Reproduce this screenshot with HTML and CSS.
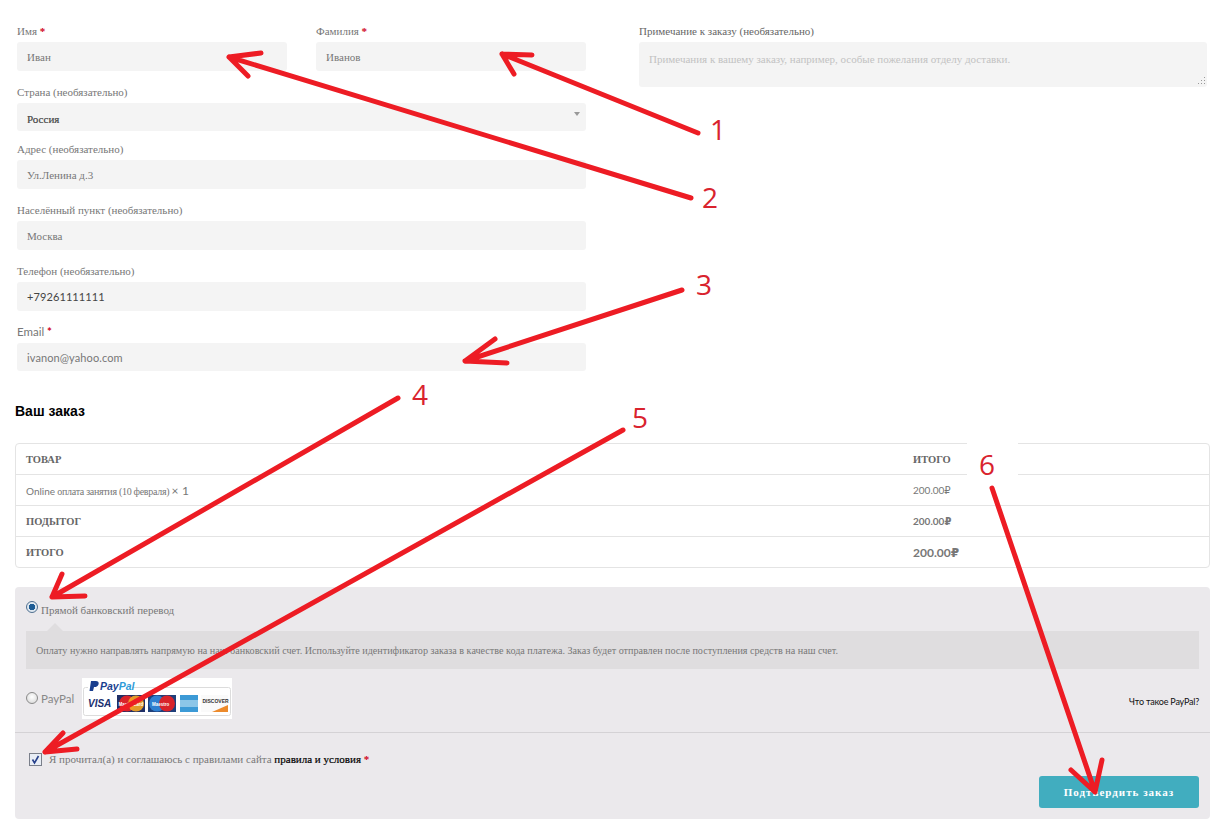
FILE: index.html
```html
<!DOCTYPE html>
<html lang="ru">
<head>
<meta charset="utf-8">
<title>Оформление заказа</title>
<link rel="stylesheet" href="styles.css">
</head>
<body>
<main class="page">
  <section class="form-grid">
    <div class="billing">
      <div class="row-two">
        <div class="field">
          <div class="label">Имя <span class="req">*</span></div>
          <div class="input">Иван</div>
        </div>
        <div class="field">
          <div class="label">Фамилия <span class="req">*</span></div>
          <div class="input">Иванов</div>
        </div>
      </div>
      <div class="field spaced">
        <div class="label">Страна (необязательно)</div>
        <div class="input select short"><span class="strong">Россия</span><span class="caret"></span></div>
      </div>
      <div class="field spaced-tight">
        <div class="label">Адрес (необязательно)</div>
        <div class="input">Ул.Ленина д.3</div>
      </div>
      <div class="field spaced">
        <div class="label">Населённый пункт (необязательно)</div>
        <div class="input">Москва</div>
      </div>
      <div class="field spaced">
        <div class="label">Телефон (необязательно)</div>
        <div class="input sans dark">+79261111111</div>
      </div>
      <div class="field spaced">
        <div class="label sans-label">Email <span class="req">*</span></div>
        <div class="input short sans">ivanon@yahoo.com</div>
      </div>
    </div>
    <div class="notes">
      <div class="label dark-label">Примечание к заказу (необязательно)</div>
      <div class="textarea">
        Примечания к вашему заказу, например, особые пожелания отделу доставки.
        <svg class="grip" width="10" height="10" viewBox="0 0 10 10"><g fill="#999"><rect x="8" y="1" width="1" height="1"/><rect x="8" y="4" width="1" height="1"/><rect x="8" y="7" width="1" height="1"/><rect x="5" y="4" width="1" height="1"/><rect x="5" y="7" width="1" height="1"/><rect x="2" y="7" width="1" height="1"/></g></svg>
      </div>
    </div>
  </section>

  <h2 class="order-title">Ваш заказ</h2>

  <table class="order">
    <tr><th class="col-name">Товар</th><th>Итого</th></tr>
    <tr><td class="col-name item"><span class="latin">Online</span> оплата занятия (10 февраля) <span class="qty">× 1</span></td><td class="money">200.00₽</td></tr>
    <tr><th class="col-name">Подытог</th><td class="money semi">200.00₽</td></tr>
    <tr><th class="col-name">Итого</th><td class="money total">200.00₽</td></tr>
  </table>

  <section class="payment">
    <div class="pay-methods">
      <div class="method">
        <span class="radio checked"></span>
        <span class="method-name">Прямой банковский перевод</span>
      </div>
      <div class="notice">Оплату нужно направлять напрямую на наш банковский счет. Используйте идентификатор заказа в качестве кода платежа. Заказ будет отправлен после поступления средств на наш счет.</div>
      <div class="method paypal">
        <span class="radio"></span>
        <span class="paypal-name">PayPal</span>
        <svg class="pp-logo" width="150" height="41" viewBox="0 0 150 41">
          <rect width="150" height="41" fill="#fff"/>
          <rect x="1.5" y="9.5" width="147" height="28" rx="2" fill="#fff" stroke="#dcdcdc"/>
          <rect x="6" y="2" width="44" height="12" fill="#fff"/>
          <path d="M9 3h5c3 0 3.500 3 1.500 5-1 1-2 1-3.500 1l-1 4H7.500z" fill="#1a3f8f"/>
          <text class="pp-word" x="18" y="12"><tspan fill="#1a3f8f">Pay</tspan><tspan fill="#2f9bd9">Pal</tspan></text>
          <rect x="5" y="15" width="26" height="19" fill="#fff"/>
          <text class="pp-visa" x="6" y="29">VISA</text>
          <rect x="35" y="17" width="28" height="17" fill="#1f2f66"/>
          <circle cx="45" cy="25.500" r="8" fill="#d8232a"/>
          <circle cx="54" cy="25.500" r="8" fill="#f5a623" opacity=".9"/>
          <text class="pp-card" x="36.500" y="27.500">MasterCard</text>
          <rect x="66" y="17" width="28" height="17" fill="#1f3f7a"/>
          <circle cx="75" cy="25.500" r="8" fill="#2f7fd0"/>
          <circle cx="85" cy="25.500" r="8" fill="#d8232a"/>
          <text class="pp-card" x="70" y="27.500">Maestro</text>
          <rect x="98" y="17" width="18" height="17" fill="#3c9ad6"/>
          <rect x="98" y="22" width="18" height="7" fill="#8cc6e8"/>
          <rect x="119" y="17" width="27" height="17" fill="#fafafa"/>
          <path d="M130 34l16-7v7z" fill="#ec8a2c"/>
          <text class="pp-disc" x="120.500" y="25">DISCOVER</text>
        </svg>
        <span class="what-paypal">Что такое PayPal?</span>
      </div>
    </div>
    <div class="terms">
      <div class="agree">
        <span class="check">
          <svg width="11" height="11" viewBox="0 0 11 11"><path d="M2.500 5.500l2 3.500 4-7" fill="none" stroke="#27408b" stroke-width="1.600"/></svg>
        </span>
        <span class="agree-text">Я прочитал(а) и соглашаюсь с правилами сайта <b class="terms-link">правила и условия</b> <span class="req">*</span></span>
      </div>
      <div class="actions"><button class="submit" type="button">Подтвердить заказ</button></div>
    </div>
  </section>
</main>

<svg class="marks" width="1212" height="820" viewBox="0 0 1212 820">
  <rect class="patch" x="967" y="441" width="51" height="50"/>
  <g class="arrows">
    <path d="M698 133L502 54M502 54L532 55M502 54L514 74"/>
    <path d="M691 198L229 57M229 57L261 53M229 57L248 76"/>
    <path d="M682 290L465 361M465 361L507 363M465 361L495 339"/>
    <path d="M398 398L52 597M52 597L85 596M52 597L62 574"/>
    <path d="M623 430L45 752M45 752L77 749M45 752L63 733"/>
    <path d="M992 488L1095 792M1095 792L1071 770M1095 792L1102 760"/>
  </g>
  <g class="nums">
    <text x="710" y="140">1</text>
    <text x="702" y="208">2</text>
    <text x="696" y="295">3</text>
    <text x="412" y="405">4</text>
    <text x="632" y="428">5</text>
    <text x="979" y="475">6</text>
  </g>
</svg>
</body>
</html>
```

FILE: styles.css
```css
* { box-sizing: border-box; }

html, body {
  margin: 0;
  padding: 0;
}

body {
  position: relative;
  width: 1212px;
  height: 820px;
  overflow: hidden;
  background: #fff;
  color: #777;
  font-family: "Liberation Serif", serif;
  font-size: 11px;
}

.page {
  padding: 24px 2px 0 15px;
}

.form-grid {
  display: grid;
  grid-template-columns: 569px 568px;
  column-gap: 53px;
  margin-left: 2px;
}

.row-two {
  display: grid;
  grid-template-columns: 270px 270px;
  column-gap: 29px;
}

.field.spaced { margin-top: 14px; }
.field.spaced-tight { margin-top: 11px; }

.label {
  height: 18px;
  line-height: 14px;
  font-size: 11px;
  color: #777;
}

.sans-label {
  font-family: Lato, sans-serif;
  font-size: 11.500px;
}

.dark-label { color: #666; }

.req {
  color: #d0021b;
  font-weight: 700;
}

.input {
  display: flex;
  align-items: center;
  height: 29px;
  padding: 0 10px;
  background: #f4f4f4;
  border-radius: 3px;
  font-size: 11px;
  color: #777;
}

.input.short { height: 28px; }

.input.sans {
  font-family: Lato, sans-serif;
  font-size: 11px;
  letter-spacing: 0.1px;
}

.input.dark { color: #444; }

.select {
  position: relative;
  padding-top: 4px;
}

.strong {
  color: #444;
  font-weight: 400;
  -webkit-text-stroke: 0.2px #444;
}

.caret {
  position: absolute;
  top: 9px;
  right: 6px;
  border-top: 4px solid #999;
  border-left: 3px solid transparent;
  border-right: 3px solid transparent;
}

.textarea {
  position: relative;
  height: 45px;
  padding: 11px 10px 0;
  background: #f4f4f4;
  border-radius: 3px;
  font-size: 11px;
  color: #c2c2c2;
}

.grip {
  position: absolute;
  right: 1px;
  bottom: 1px;
}

.order-title {
  margin: 33px 0 0;
  height: 39px;
  font-family: "Liberation Sans", sans-serif;
  font-size: 14px;
  line-height: 14px;
  font-weight: 700;
  color: #000;
}

.order {
  width: 1195px;
  border-collapse: separate;
  border-spacing: 0;
  border: 1px solid #e4e4e4;
  border-radius: 4px;
  table-layout: fixed;
}

.order th,
.order td {
  height: 31px;
  padding: 0 10px;
  border-top: 1px solid #e4e4e4;
  text-align: left;
  vertical-align: middle;
  font-weight: 400;
}

.order tr:first-child th { border-top: 0; height: 30px; }

.order th {
  font-family: "Liberation Serif", serif;
  font-size: 10.500px;
  font-weight: 700;
  text-transform: uppercase;
  color: #666;
}

.order .col-name { width: 887px; }

.order td.item {
  font-size: 10px;
  letter-spacing: -0.3px;
  color: #777;
}

.latin {
  font-family: Lato, sans-serif;
  letter-spacing: 0;
}

.qty {
  font-family: Lato, sans-serif;
  font-size: 12px;
  letter-spacing: 0.2px;
}

.order td.money {
  font-family: Lato, "DejaVu Sans", sans-serif;
  font-size: 10px;
  color: #777;
}

.order td.semi { font-weight: 700; font-size: 10px; }
.order td.total { font-weight: 700; font-size: 12px; }

.payment {
  height: 232px;
  margin-top: 19px;
  background: #ebe9ec;
  border-radius: 4px;
}

.pay-methods {
  height: 146px;
  padding: 12px 11px 0;
  border-bottom: 1px solid #d4d2d5;
}

.method {
  display: flex;
  align-items: center;
  height: 18px;
}

.radio {
  flex: none;
  width: 12px;
  height: 12px;
  margin-top: -2px;
  border: 1px solid #8a8a8a;
  border-radius: 50%;
  background: radial-gradient(circle at 50% 40%, #fff, #d4d4d4);
}

.radio.checked {
  background: radial-gradient(circle, #1d5c95 0 3px, #dfe8f0 3.500px);
  border-color: #4f6f8f;
}

.method-name {
  margin-left: 3px;
  padding-top: 3px;
  font-size: 11px;
  color: #777;
}

.notice {
  position: relative;
  display: flex;
  align-items: center;
  height: 38px;
  margin-top: 14px;
  padding: 0 10px;
  background: #dfdddf;
  font-size: 10.150px;
  color: #777;
}

.notice::before {
  content: "";
  position: absolute;
  top: -8px;
  left: 21px;
  border-bottom: 8px solid #dfdddf;
  border-left: 8px solid transparent;
  border-right: 8px solid transparent;
}

.method.paypal {
  height: 41px;
  margin-top: 9px;
}

.paypal-name {
  margin-left: 3px;
  font-family: Lato, sans-serif;
  font-size: 11.500px;
  color: #888;
}

.pp-logo {
  flex: none;
  margin-left: 8px;
}

.pp-word {
  font-family: "Liberation Sans", sans-serif;
  font-size: 10.500px;
  font-weight: 700;
  font-style: italic;
}

.pp-visa {
  font-family: "Liberation Sans", sans-serif;
  font-size: 10px;
  font-weight: 700;
  font-style: italic;
  fill: #1a2f6f;
}

.pp-card {
  font-family: "Liberation Sans", sans-serif;
  font-size: 4.500px;
  font-weight: 700;
  fill: #fff;
}

.pp-disc {
  font-family: "Liberation Sans", sans-serif;
  font-size: 5px;
  font-weight: 700;
  fill: #333;
}

.what-paypal {
  margin-left: auto;
  padding-top: 6px;
  font-family: Lato, sans-serif;
  font-size: 9px;
  letter-spacing: -0.2px;
  color: #111;
}

.terms {
  padding: 20px 11px 0 14px;
}

.agree {
  display: flex;
  align-items: center;
  height: 13px;
}

.check {
  display: flex;
  align-items: center;
  justify-content: center;
  flex: none;
  width: 13px;
  height: 13px;
  background: #e8edf5;
  border: 1px solid #7a7f8a;
}

.agree-text {
  margin-left: 7px;
  margin-top: -2px;
  font-size: 11px;
  color: #777;
}

.terms-link {
  font-weight: 400;
  color: #000;
  -webkit-text-stroke: 0.2px #000;
}

.actions {
  display: flex;
  justify-content: flex-end;
  margin-top: 10px;
}

.submit {
  width: 160px;
  height: 32px;
  padding: 0;
  border: 0;
  border-radius: 3px;
  background: #41adbf;
  color: #fff;
  font-family: "Liberation Serif", serif;
  font-size: 11px;
  font-weight: 700;
  letter-spacing: 1px;
}

.marks {
  position: absolute;
  top: 0;
  left: 0;
  pointer-events: none;
}

.patch { fill: #fff; }

.arrows path {
  fill: none;
  stroke: #ed1c24;
  stroke-width: 5;
  stroke-linecap: round;
  stroke-linejoin: round;
}

.nums text {
  font-family: "Open Sans", sans-serif;
  font-size: 28px;
  font-weight: 400;
  fill: #d9232e;
}
```
